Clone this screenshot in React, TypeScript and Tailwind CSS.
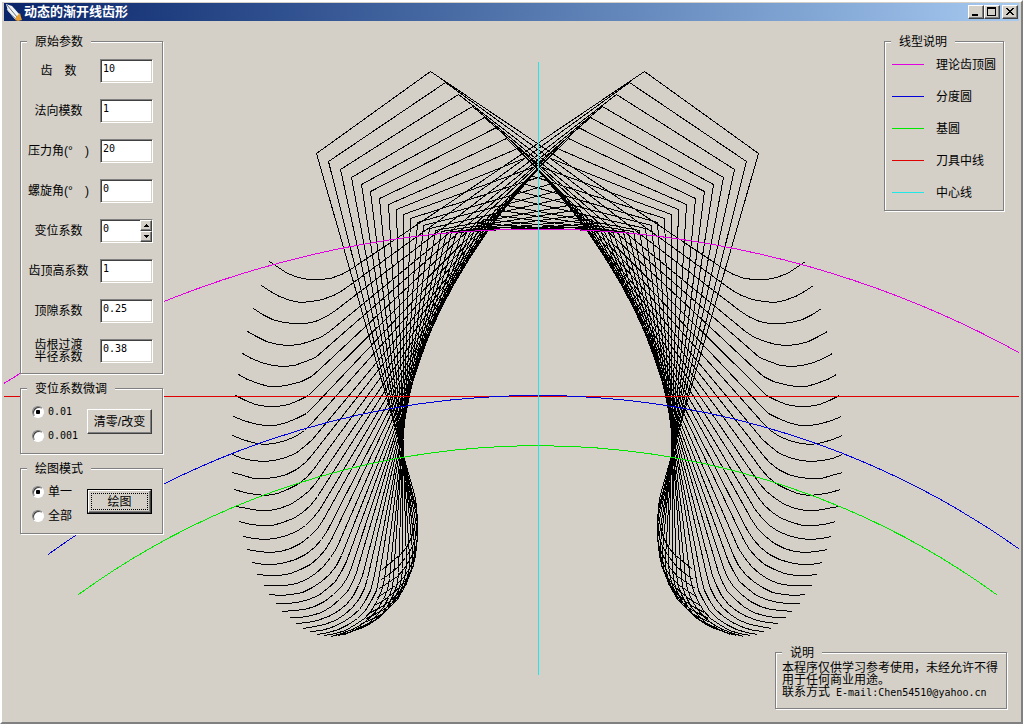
import type { ReactNode } from "react";

const MODULE = 166.5;
const TEETH = 10;
const PRESSURE = (20 * Math.PI) / 180;
const R = (MODULE * TEETH) / 2;
const CX = 537.5;
const CY = 395.5 + R;
const LIMIT = (36 * Math.PI) / 180;
const STEPS = 40;

type Point = [number, number];

/* Half of the rack profile: from the root of the rack down its flank, round the tip fillet. */
function rackHalf(): Point[] {
  const add = MODULE;
  const ded = MODULE * 1.25;
  const rho = MODULE * 0.38;
  const half = (Math.PI * MODULE) / 4;
  const tan = Math.tan(PRESSURE);
  const cornerX = half + ded * tan;
  const arcX = cornerX + rho * Math.tan((Math.PI / 2 - PRESSURE) / 2);
  const arcY = -ded + rho;
  const points: Point[] = [[half - add * tan, add]];
  for (let i = 0; i <= 7; i++) {
    const a = Math.PI + PRESSURE + ((Math.PI / 2 - PRESSURE) * i) / 7;
    points.push([arcX + rho * Math.cos(a), arcY + rho * Math.sin(a)]);
  }
  points.push([(Math.PI * MODULE) / 2, -ded]);
  return points;
}

const half = rackHalf();
const rack: Point[] = [...half.map(([s, h]): Point => [-s, h]).reverse(), ...half];

const positions = Array.from({ length: STEPS + 1 }, (_, i) => {
  const phi = -LIMIT + (2 * LIMIT * i) / STEPS;
  const sin = Math.sin(phi);
  const cos = Math.cos(phi);
  return rack
    .map(([s, h]) => {
      const along = s - R * phi;
      const x = CX + (R + h) * sin + along * cos;
      const y = CY - (R + h) * cos + along * sin;
      return `${Math.floor(x) + 0.5},${Math.floor(y) + 0.5}`;
    })
    .join(" ");
});

function arc(radius: number) {
  const dx = radius * Math.sin(LIMIT);
  const y = CY - radius * Math.cos(LIMIT);
  return `M${CX - dx} ${y}A${radius} ${radius} 0 0 1 ${CX + dx} ${y}`;
}

function Drawing() {
  return (
    <svg
      viewBox="4 21 1015 701"
      preserveAspectRatio="xMidYMin meet"
      shapeRendering="crispEdges"
      fill="none"
      className="col-start-1 row-start-1 h-full w-full"
      aria-label="齿形"
    >
      {positions.map((points) => (
        <polyline key={points} points={points} stroke="#000" />
      ))}
      <path d={arc(R + MODULE)} stroke="#e000e0" />
      <path d="M4 396.5H1020" stroke="#e00000" />
      <path d={arc(R)} stroke="#0000d8" />
      <path d={arc(R * Math.cos(PRESSURE))} stroke="#00e800" />
      <path d="M538.5 62V675" stroke="#20e8e8" />
    </svg>
  );
}

function Group({ title, className = "", children }: { title: string; className?: string; children: ReactNode }) {
  return (
    <fieldset
      className={`min-w-0 border border-[#808080] bg-[#d4d0c8] shadow-[1px_1px_0_#fff,inset_1px_1px_0_#fff] ${className}`}
    >
      <legend className="ml-1.5 h-[11px] bg-[#d4d0c8] px-2 leading-[13px]">{title}</legend>
      {children}
    </fieldset>
  );
}

const sunken =
  "border border-t-[#808080] border-l-[#808080] border-r-white border-b-white bg-white shadow-[inset_1px_1px_0_#404040,inset_-1px_-1px_0_#d4d0c8]";
const raised =
  "border border-t-white border-l-white border-r-[#404040] border-b-[#404040] bg-[#d4d0c8] shadow-[inset_-1px_-1px_0_#808080]";
const mono = "font-['DejaVu_Sans_Mono','Noto_Sans_CJK_SC',monospace] text-[10px]";

const fields = [
  { id: "teeth", label: "齿\u3000数", value: "10" },
  { id: "module", label: "法向模数", value: "1" },
  { id: "pressure", label: "压力角(°\u2003)", value: "20" },
  { id: "helix", label: "螺旋角(°\u2003)", value: "0" },
  { id: "shift", label: "变位系数", value: "0", spin: true },
  { id: "addendum", label: "齿顶高系数", value: "1" },
  { id: "clearance", label: "顶隙系数", value: "0.25" },
  { id: "fillet", label: "齿根过渡\n半径系数", value: "0.38" },
];

function SpinButton({ label, path }: { label: string; path: string }) {
  return (
    <button type="button" aria-label={label} className={`flex flex-1 items-center justify-center ${raised}`}>
      <svg viewBox="0 0 5 3" className="h-[3px] w-[5px]" shapeRendering="crispEdges">
        <path d={path} />
      </svg>
    </button>
  );
}

function Field({ id, label, value, spin }: { id: string; label: string; value: string; spin?: boolean }) {
  return (
    <div className="flex h-6 items-center gap-1">
      <label htmlFor={id} className="w-[75px] text-center leading-3 whitespace-pre">
        {label}
      </label>
      <div className={`flex h-6 w-[53px] ${sunken}`}>
        <input
          id={id}
          type="text"
          defaultValue={value}
          className={`min-w-0 flex-1 bg-transparent pb-1 pl-0.5 outline-none ${mono}`}
        />
        {spin && (
          <div className="flex w-3 flex-col">
            <SpinButton label="增大" path="M2 0h1v1h1v1h1v1H0V2h1V1h1z" />
            <SpinButton label="减小" path="M0 0h5v1H4v1H3v1H2V2H1V1H0z" />
          </div>
        )}
      </div>
    </div>
  );
}

function Radio({ name, label, checked, latin }: { name: string; label: string; checked?: boolean; latin?: boolean }) {
  return (
    <label className={`flex h-3 items-center gap-1 leading-3 ${latin ? mono : ""}`}>
      <input
        type="radio"
        name={name}
        defaultChecked={checked}
        className="size-3 appearance-none rounded-full border border-t-[#808080] border-l-[#808080] border-r-white border-b-white bg-white bg-[radial-gradient(circle,#000_2px,transparent_2.5px)] shadow-[inset_1px_1px_0_#404040] not-checked:bg-none"
      />
      {label}
    </label>
  );
}

const lines = [
  { label: "理论齿顶圆", color: "#e000e0" },
  { label: "分度圆", color: "#0000d8" },
  { label: "基圆", color: "#00e800" },
  { label: "刀具中线", color: "#e00000" },
  { label: "中心线", color: "#20e8e8" },
];

function CaptionButton({ label, children }: { label: string; children: ReactNode }) {
  return (
    <button type="button" aria-label={label} className={`h-3.5 w-4 ${raised}`}>
      <svg viewBox="0 0 14 12" className="h-3 w-3.5" shapeRendering="crispEdges" fill="none" stroke="#000">
        {children}
      </svg>
    </button>
  );
}

function TitleBar() {
  return (
    <header className="flex h-[18px] items-center bg-linear-to-r from-[#0a246a] to-[#a6caf0] pr-px">
      <svg viewBox="0 0 18 18" className="h-[18px] w-[18px]">
        <path d="M2 1l6 2 8 9-4 4-8-8z" fill="#f0f4f4" />
        <path d="M3 2l10 12" stroke="#6a7080" />
        <path d="M3 6l8 10" stroke="#c8ccd0" />
        <path d="M12 14l4-4 1 4 1 3-4 1-3-1z" fill="#e8a030" />
      </svg>
      <h1 className="flex-1 pl-0.5 text-[13px] leading-4 font-bold text-white">动态的渐开线齿形</h1>
      <CaptionButton label="最小化">
        <path d="M3 9h6" strokeWidth="2" />
      </CaptionButton>
      <CaptionButton label="最大化">
        <path d="M2.5 2v7.5h8V2" />
        <path d="M2 2h9" strokeWidth="2" />
      </CaptionButton>
      <div className="w-0.5" />
      <CaptionButton label="关闭">
        <path d="M3 2l7 7M4 2l7 7M10 2L3 9M11 2L4 9" />
      </CaptionButton>
    </header>
  );
}

export default function App() {
  return (
    <div className="flex min-h-screen flex-col border-2 border-t-white border-l-white border-r-[#808080] border-b-[#808080] bg-[#d4d0c8] px-0.5 pt-px font-['Liberation_Sans','Noto_Sans_CJK_SC',sans-serif] text-xs text-black">
      <TitleBar />
      <main className="grid flex-1">
        <Drawing />
        <div className="col-start-1 row-start-1 flex items-start justify-between pt-[15px] pr-[15px] pl-4">
          <div className="flex w-[143px] flex-col gap-[9px]">
            <Group title="原始参数">
              <div className="flex flex-col gap-4 pt-3 pb-[10px]">
                {fields.map((field) => (
                  <Field key={field.id} {...field} />
                ))}
              </div>
            </Group>
            <Group title="变位系数微调">
              <div className="flex items-start justify-between pt-3 pr-2.5 pb-[11px] pl-[11px]">
                <div className="flex flex-col gap-3">
                  <Radio name="step" label="0.01" checked latin />
                  <Radio name="step" label="0.001" latin />
                </div>
                <button type="button" className={`mt-[3px] h-[25px] w-[65px] ${raised}`}>
                  清零/改变
                </button>
              </div>
            </Group>
            <Group title="绘图模式">
              <div className="flex items-start justify-between pt-3 pr-2.5 pb-[11px] pl-[11px]">
                <div className="flex flex-col gap-3">
                  <Radio name="mode" label="单一" checked />
                  <Radio name="mode" label="全部" />
                </div>
                <button type="button" className="mt-[3px] h-[25px] w-[65px] border border-black">
                  <span className={`flex h-[23px] p-0.5 ${raised}`}>
                    <span className="flex flex-1 items-center justify-center border border-dotted border-black">绘图</span>
                  </span>
                </button>
              </div>
            </Group>
          </div>
          <Group title="线型说明" className="w-[120px]">
            <ul className="flex flex-col gap-5 pt-3 pb-[11px] pl-[7px]">
              {lines.map(({ label, color }) => (
                <li key={label} className="flex h-3 items-center gap-3 leading-3">
                  <svg viewBox="0 0 32 2" className="h-0.5 w-8" shapeRendering="crispEdges">
                    <path d="M0 .5h32" stroke={color} />
                  </svg>
                  {label}
                </li>
              ))}
            </ul>
          </Group>
        </div>
        <div className="col-start-1 row-start-1 self-end justify-self-end pr-3 pb-[13px]">
          <Group title="说明" className="w-[232px]">
            <p className="pt-1 pr-1 pb-[9px] pl-1.5 leading-3">
              本程序仅供学习参考使用，未经允许不得用于任何商业用途。
              <br />
              联系方式<span className={mono}> E-mail:Chen54510@yahoo.cn</span>
            </p>
          </Group>
        </div>
      </main>
    </div>
  );
}
